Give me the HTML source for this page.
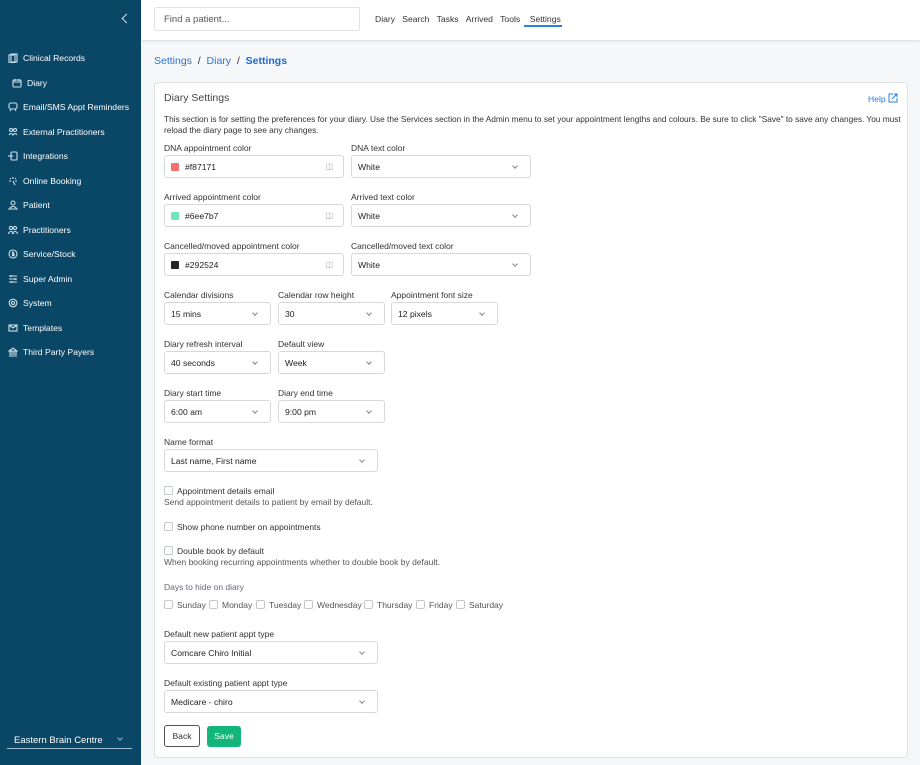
<!DOCTYPE html>
<html><head><meta charset="utf-8"><style>
*{box-sizing:border-box;margin:0;padding:0}
body{width:920px;height:765px;overflow:hidden;font-family:"Liberation Sans",sans-serif;background:#f5f7f9;position:relative;color:#222}
.sb{position:absolute;left:0;top:0;width:141px;height:765px;background:#0a4665;color:#fff}
.sb .it{position:absolute;left:8px;font-size:8.6px;display:flex;align-items:center;gap:5px;height:12px}
.sb svg{width:10px;height:10px;stroke:#cfe0ea;fill:none;stroke-width:1.1}
.hd{position:absolute;left:141px;top:0;right:0;height:40px;background:#fff;box-shadow:0 1px 3px rgba(0,0,0,.12)}
.a{position:absolute}
.lbl{position:absolute;font-size:8.5px;color:#333}
.box{position:absolute;height:23px;background:#fff;border:1px solid #d6d9dc;border-radius:3px;font-size:8.6px;color:#222;display:flex;align-items:center;padding-left:6px}
.box .ch{position:absolute;right:13px;top:8px;width:4px;height:4px;border-right:1px solid #888;border-bottom:1px solid #888;transform:rotate(45deg)}
.cb{position:absolute;width:9px;height:9px;border:1px solid #c4c8cc;border-radius:2px;background:#fff}
.t{position:absolute;font-size:8.5px;color:#333;white-space:nowrap;line-height:10px}
.s{color:#555}
</style></head><body>
<div class="sb">
<div class="a" style="left:123px;top:15px;width:7px;height:7px;border-left:1.2px solid #cfe0ea;border-bottom:1.2px solid #cfe0ea;transform:rotate(45deg)"></div>
<div class="it" style="top:52px"><svg viewBox="0 0 10 10"><rect x="3" y="1" width="6" height="8"/><rect x="1" y="2" width="6" height="8"/></svg>Clinical Records</div>
<div class="it" style="top:77px;left:12px"><svg viewBox="0 0 10 10"><rect x="1" y="2" width="8" height="7" rx="1"/><path d="M1 4h8M3 1v2M7 1v2"/></svg>Diary</div>
<div class="it" style="top:101px"><svg viewBox="0 0 10 10"><rect x="1" y="1" width="8" height="6" rx="2"/><path d="M3 7l-1 2M7 7l1 2"/></svg>Email/SMS Appt Reminders</div>
<div class="it" style="top:126px"><svg viewBox="0 0 10 10"><circle cx="3" cy="3" r="1.5"/><circle cx="7" cy="3" r="1.5"/><path d="M1 8q2-3 4 0q2-3 4 0"/></svg>External Practitioners</div>
<div class="it" style="top:150px"><svg viewBox="0 0 10 10"><rect x="3" y="1" width="6" height="8" rx="1"/><path d="M0 5h5"/></svg>Integrations</div>
<div class="it" style="top:175px"><svg viewBox="0 0 10 10"><path d="M5 1v2M1 5h2M7 5h2M2 2l1 1M8 2l-1 1M5 5l2 4"/></svg>Online Booking</div>
<div class="it" style="top:199px"><svg viewBox="0 0 10 10"><circle cx="5" cy="3" r="2"/><path d="M1 9q4-5 8 0z"/></svg>Patient</div>
<div class="it" style="top:224px"><svg viewBox="0 0 10 10"><circle cx="3" cy="3" r="1.6"/><circle cx="7" cy="3" r="1.6"/><path d="M0 9q3-5 6 0M4 9q3-5 6 0"/></svg>Practitioners</div>
<div class="it" style="top:248px"><svg viewBox="0 0 10 10"><circle cx="5" cy="5" r="4"/><path d="M6 3.5H4.5v1.5H6v1.5H4M5 2.5v5"/></svg>Service/Stock</div>
<div class="it" style="top:273px"><svg viewBox="0 0 10 10"><path d="M1 2h8M1 5h8M1 8h8M3 1v2M7 4v2M4 7v2"/></svg>Super Admin</div>
<div class="it" style="top:297px"><svg viewBox="0 0 10 10"><circle cx="5" cy="5" r="1.5"/><circle cx="5" cy="5" r="3.8"/></svg>System</div>
<div class="it" style="top:322px"><svg viewBox="0 0 10 10"><rect x="1" y="2" width="8" height="6"/><path d="M1 2l4 3 4-3"/></svg>Templates</div>
<div class="it" style="top:346px"><svg viewBox="0 0 10 10"><path d="M1 4l4-3 4 3zM2 4v4M4 4v4M6 4v4M8 4v4M1 9h8"/></svg>Third Party Payers</div>
<div class="a" style="left:14px;top:735px;font-size:9.5px;color:#fff">Eastern Brain Centre</div>
<div class="a" style="left:118px;top:736px;width:4px;height:4px;border-right:1px solid #8fb0c3;border-bottom:1px solid #8fb0c3;transform:rotate(45deg)"></div>
<div class="a" style="left:7px;top:748px;width:125px;height:1px;background:#9fc0d3"></div>
</div>
<div class="hd"></div>
<div class="a" style="left:154px;top:7px;width:206px;height:24px;background:#fff;border:1px solid #e1e4e7;border-radius:2px;font-size:9.5px;color:#555;padding:6px 9px">Find a patient...</div>
<div class="a" style="left:375px;top:14px;font-size:8.6px;color:#333;word-spacing:0">Diary&nbsp;&nbsp;&nbsp;Search&nbsp;&nbsp;&nbsp;Tasks&nbsp;&nbsp;&nbsp;Arrived&nbsp;&nbsp;&nbsp;Tools&nbsp;&nbsp;&nbsp;&nbsp;Settings</div>
<div class="a" style="left:524px;top:25px;width:38px;height:1.5px;background:#2f7fe0"></div>
<div class="a" style="left:154px;top:55px;font-size:10.5px;color:#2a73d9">Settings &nbsp;<span style="color:#333">/</span>&nbsp; Diary &nbsp;<span style="color:#333">/</span>&nbsp; <b style="color:#1e67d0">Settings</b></div>
<div class="a" style="left:154px;top:82px;width:754px;height:676px;background:#fff;border:1px solid #dfe2e5;border-radius:4px"></div>
<div class="a" style="left:164px;top:92px;font-size:10.5px;color:#444">Diary Settings</div>
<div class="a" style="left:868px;top:93px;font-size:8.6px;color:#2a7de0">Help <svg width="10" height="10" viewBox="0 0 10 10" style="vertical-align:-1px" fill="none" stroke="#2a7de0" stroke-width="1"><path d="M5 1H1v8h8V5M6 1h3v3M9 1L4 6"/></svg></div>
<div class="t" style="left:164px;top:114px;line-height:11px;white-space:normal;width:740px;font-size:8.3px">This section is for setting the preferences for your diary. Use the Services section in the Admin menu to set your appointment lengths and colours. Be sure to click "Save" to save any changes. You must reload the diary page to see any changes.</div>

<div class="lbl" style="left:164px;top:143px">DNA appointment color</div>
<div class="lbl" style="left:351px;top:143px">DNA text color</div>
<div class="box" style="left:164px;top:155px;width:180px"><span style="width:8px;height:8px;background:#f87171;border-radius:1px;margin-right:6px;display:inline-block"></span>#f87171<span class="a" style="right:10px;top:6px;font-size:8px;color:#aaa">&#9707;</span></div>
<div class="box" style="left:351px;top:155px;width:180px">White<span class="ch"></span></div>

<div class="lbl" style="left:164px;top:192px">Arrived appointment color</div>
<div class="lbl" style="left:351px;top:192px">Arrived text color</div>
<div class="box" style="left:164px;top:204px;width:180px"><span style="width:8px;height:8px;background:#6ee7b7;border-radius:1px;margin-right:6px;display:inline-block"></span>#6ee7b7<span class="a" style="right:10px;top:6px;font-size:8px;color:#aaa">&#9707;</span></div>
<div class="box" style="left:351px;top:204px;width:180px">White<span class="ch"></span></div>

<div class="lbl" style="left:164px;top:241px">Cancelled/moved appointment color</div>
<div class="lbl" style="left:351px;top:241px">Cancelled/moved text color</div>
<div class="box" style="left:164px;top:253px;width:180px"><span style="width:8px;height:8px;background:#292524;border-radius:1px;margin-right:6px;display:inline-block"></span>#292524<span class="a" style="right:10px;top:6px;font-size:8px;color:#aaa">&#9707;</span></div>
<div class="box" style="left:351px;top:253px;width:180px">White<span class="ch"></span></div>

<div class="lbl" style="left:164px;top:290px">Calendar divisions</div>
<div class="lbl" style="left:278px;top:290px">Calendar row height</div>
<div class="lbl" style="left:391px;top:290px">Appointment font size</div>
<div class="box" style="left:164px;top:302px;width:107px">15 mins<span class="ch"></span></div>
<div class="box" style="left:278px;top:302px;width:107px">30<span class="ch"></span></div>
<div class="box" style="left:391px;top:302px;width:107px">12 pixels<span class="ch"></span></div>

<div class="lbl" style="left:164px;top:339px">Diary refresh interval</div>
<div class="lbl" style="left:278px;top:339px">Default view</div>
<div class="box" style="left:164px;top:351px;width:107px">40 seconds<span class="ch"></span></div>
<div class="box" style="left:278px;top:351px;width:107px">Week<span class="ch"></span></div>

<div class="lbl" style="left:164px;top:388px">Diary start time</div>
<div class="lbl" style="left:278px;top:388px">Diary end time</div>
<div class="box" style="left:164px;top:400px;width:107px">6:00 am<span class="ch"></span></div>
<div class="box" style="left:278px;top:400px;width:107px">9:00 pm<span class="ch"></span></div>

<div class="lbl" style="left:164px;top:437px">Name format</div>
<div class="box" style="left:164px;top:449px;width:214px">Last name, First name<span class="ch"></span></div>

<div class="cb" style="left:164px;top:486px"></div><div class="t" style="left:177px;top:486px">Appointment details email</div>
<div class="t s" style="left:164px;top:497px">Send appointment details to patient by email by default.</div>
<div class="cb" style="left:164px;top:522px"></div><div class="t" style="left:177px;top:522px">Show phone number on appointments</div>
<div class="cb" style="left:164px;top:546px"></div><div class="t" style="left:177px;top:546px">Double book by default</div>
<div class="t s" style="left:164px;top:557px">When booking recurring appointments whether to double book by default.</div>
<div class="t" style="left:164px;top:582px;color:#667">Days to hide on diary</div>
<div class="cb" style="left:164px;top:600px"></div><div class="t s" style="left:177px;top:600px">Sunday</div>
<div class="cb" style="left:209px;top:600px"></div><div class="t s" style="left:222px;top:600px">Monday</div>
<div class="cb" style="left:256px;top:600px"></div><div class="t s" style="left:269px;top:600px">Tuesday</div>
<div class="cb" style="left:304px;top:600px"></div><div class="t s" style="left:317px;top:600px">Wednesday</div>
<div class="cb" style="left:364px;top:600px"></div><div class="t s" style="left:377px;top:600px">Thursday</div>
<div class="cb" style="left:416px;top:600px"></div><div class="t s" style="left:429px;top:600px">Friday</div>
<div class="cb" style="left:456px;top:600px"></div><div class="t s" style="left:469px;top:600px">Saturday</div>

<div class="lbl" style="left:164px;top:629px">Default new patient appt type</div>
<div class="box" style="left:164px;top:641px;width:214px">Comcare Chiro Initial<span class="ch"></span></div>
<div class="lbl" style="left:164px;top:678px">Default existing patient appt type</div>
<div class="box" style="left:164px;top:690px;width:214px">Medicare - chiro<span class="ch"></span></div>

<div class="a" style="left:164px;top:725px;width:36px;height:22px;border:1px solid #555;border-radius:3px;font-size:8.6px;color:#333;text-align:center;line-height:20px">Back</div>
<div class="a" style="left:207px;top:726px;width:34px;height:21px;background:#12b57a;border-radius:3px;font-size:8.6px;color:#fff;text-align:center;line-height:21px">Save</div>
</body></html>
